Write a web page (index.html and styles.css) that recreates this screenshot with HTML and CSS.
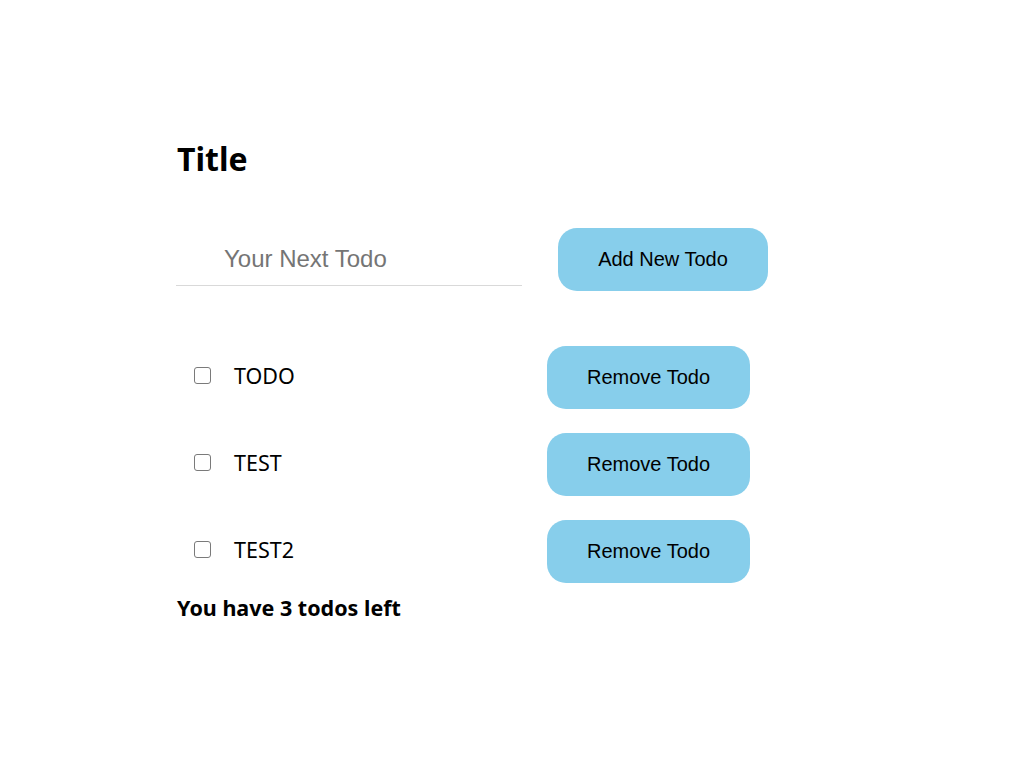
FILE: index.html
```html
<!DOCTYPE html>
<html>
<head>
<meta charset="utf-8">
<link rel="stylesheet" href="styles.css">
</head>
<body>
<main class="app">
  <h1 class="title">Title</h1>
  <form class="add-form">
    <input class="todo-input" type="text" placeholder="Your Next Todo">
    <button class="btn btn-add" type="button">Add New Todo</button>
  </form>
  <ul class="todo-list">
    <li class="todo-item">
      <label class="todo-label"><input class="check" type="checkbox"><span class="todo-text">TODO</span></label>
      <button class="btn btn-remove" type="button">Remove Todo</button>
    </li>
    <li class="todo-item">
      <label class="todo-label"><input class="check" type="checkbox"><span class="todo-text">TEST</span></label>
      <button class="btn btn-remove" type="button">Remove Todo</button>
    </li>
    <li class="todo-item">
      <label class="todo-label"><input class="check" type="checkbox"><span class="todo-text">TEST2</span></label>
      <button class="btn btn-remove" type="button">Remove Todo</button>
    </li>
  </ul>
  <p class="summary">You have 3 todos left</p>
</main>
</body>
</html>
```
FILE: styles.css
```css
* { box-sizing: border-box; }
html, body { margin: 0; padding: 0; background: #fff; }
body {
  font-family: "Noto Sans", "Noto Sans CJK KR", sans-serif;
  color: #000;
}
.app {
  padding: 134px 0 0 176px;
}
.title {
  margin: 0 0 0 1px;
  font-size: 32px;
  font-weight: 700;
  line-height: 50px;
}
.add-form {
  display: flex;
  align-items: flex-start;
  margin-top: 44px;
}
.todo-input {
  width: 346px;
  height: 58px;
  border: none;
  border-bottom: 1px solid #d9d9d9;
  padding: 4px 0 0 48px;
  font-family: "Liberation Sans", Arial, sans-serif;
  font-size: 24px;
  color: #333;
  outline: none;
  background: transparent;
}
.todo-input::placeholder { color: #757575; }
.btn {
  border: none;
  background: #87ceeb;
  border-radius: 19px;
  font-family: "Liberation Sans", Arial, sans-serif;
  font-size: 20px;
  color: #000;
  height: 63px;
  padding: 0;
}
.btn-add {
  width: 210px;
  margin-left: 36px;
}
.todo-list {
  list-style: none;
  margin: 55px 0 0 0;
  padding: 0;
  display: flex;
  flex-direction: column;
  gap: 24px;
}
.todo-item {
  display: flex;
  align-items: center;
}
.todo-label {
  width: 371px;
  display: flex;
  align-items: center;
  margin-bottom: 4px;
}
.check {
  appearance: none;
  -webkit-appearance: none;
  width: 17px;
  height: 17px;
  margin: 0 0 1px 18px;
  border: 1.5px solid #7a7a7a;
  border-radius: 3px;
  background: #fff;
}
.todo-text {
  margin-left: 23px;
  font-size: 21.5px;
}
.btn-remove {
  width: 203px;
}
.summary {
  margin: 10px 0 0 1px;
  font-size: 21.5px;
  font-weight: 700;
}
```
